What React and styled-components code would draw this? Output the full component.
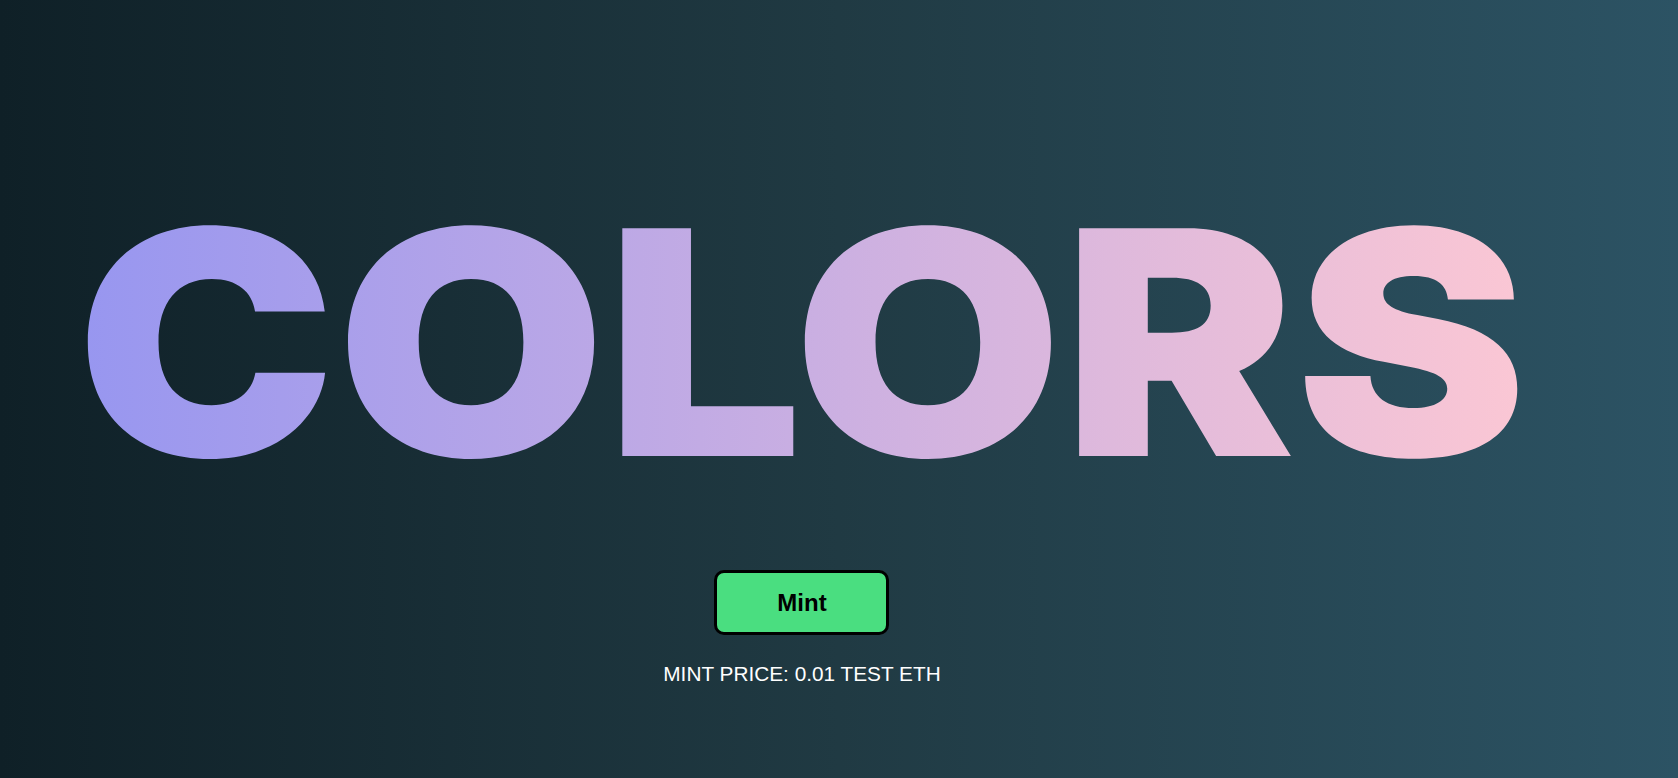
import React from "react";
import styled, { createGlobalStyle } from "styled-components";

const Global = createGlobalStyle`
  html, body { margin: 0; padding: 0; }
  body { font-family: "Liberation Sans", Arial, sans-serif; }
`;

const Page = styled.main`
  min-height: 100vh;
  box-sizing: border-box;
  background: linear-gradient(to right, #0f2027, #203a43, #2c5364);
  display: flex;
  justify-content: center;
  padding-right: 74px;
`;

const Column = styled.section`
  display: flex;
  flex-direction: column;
  align-items: center;
  padding-top: 186px;
`;

const Title = styled.h1`
  margin: 0;
  font-family: Inter, "Liberation Sans", sans-serif;
  font-weight: 900;
  font-size: 313px;
  line-height: 1;
  letter-spacing: 0;
  transform: scaleX(1.112);
  background: linear-gradient(to right, #9796f0, #fbc7d4);
  -webkit-background-clip: text;
  background-clip: text;
  color: transparent;
`;

const MintButton = styled.button`
  margin-top: 71px;
  width: 175px;
  height: 65px;
  box-sizing: border-box;
  border: 3px solid #000;
  border-radius: 10px;
  background: #4ade80;
  color: #000;
  font-family: "Liberation Sans", Arial, sans-serif;
  font-weight: 700;
  font-size: 24px;
  cursor: pointer;
`;

const Price = styled.p`
  margin: 27px 0 0;
  color: #fff;
  font-family: "Liberation Sans", Arial, sans-serif;
  font-size: 20.8px;
`;

export default function App() {
  return (
    <>
      <Global />
      <Page>
        <Column>
          <Title>COLORS</Title>
          <MintButton>Mint</MintButton>
          <Price>MINT PRICE: 0.01 TEST ETH</Price>
        </Column>
      </Page>
    </>
  );
}
